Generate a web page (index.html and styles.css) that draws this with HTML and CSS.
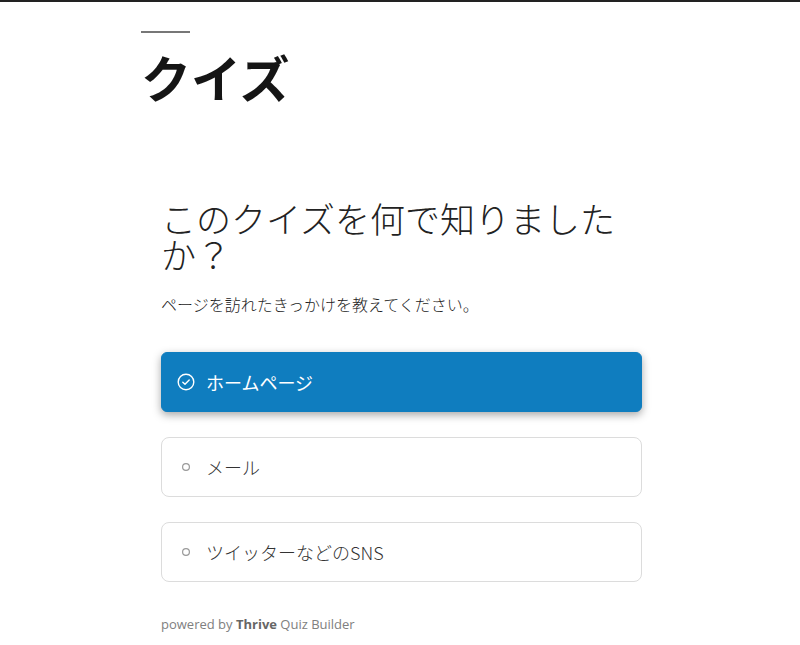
FILE: index.html
```html
<!DOCTYPE html>
<html lang="ja">
<head>
<meta charset="utf-8">
<title>クイズ</title>
<link rel="stylesheet" href="styles.css">
</head>
<body>
<div class="topbar"></div>
<main class="page">
  <div class="rule"></div>
  <h1 class="title">クイズ</h1>
  <section class="quiz">
    <h2 class="question">このクイズを何で知りましたか？</h2>
    <p class="desc">ページを訪れたきっかけを教えてください。</p>
    <div class="options">
      <div class="option selected">
        <span class="icon">
          <svg width="18" height="18" viewBox="0 0 18 18"><circle cx="9" cy="9" r="7.8" fill="none" stroke="#fff" stroke-width="1.4"/><path d="M5.8 9.2 L8 11.3 L12.2 6.9" fill="none" stroke="#fff" stroke-width="1.4" stroke-linecap="round" stroke-linejoin="round"/></svg>
        </span>
        <span class="label">ホームページ</span>
      </div>
      <div class="option">
        <span class="icon">
          <svg width="18" height="18" viewBox="0 0 18 18"><circle cx="9" cy="9" r="3.4" fill="none" stroke="#999" stroke-width="1.2"/></svg>
        </span>
        <span class="label">メール</span>
      </div>
      <div class="option">
        <span class="icon">
          <svg width="18" height="18" viewBox="0 0 18 18"><circle cx="9" cy="9" r="3.4" fill="none" stroke="#999" stroke-width="1.2"/></svg>
        </span>
        <span class="label">ツイッターなどのSNS</span>
      </div>
    </div>
    <p class="powered">powered by <b>Thrive</b> Quiz Builder</p>
  </section>
</main>
</body>
</html>
```
FILE: styles.css
```css
html, body {
  margin: 0;
  padding: 0;
  background: #fff;
}
body {
  font-family: "Noto Sans CJK JP", "Noto Sans", sans-serif;
  color: #222;
}
.topbar {
  height: 2px;
  background: #222;
}
.page {
  width: 521px;
  margin-left: calc(50% - 259px);
  padding-top: 29px;
}
.rule {
  width: 49px;
  height: 2px;
  background: #777;
}
.title {
  margin: 18px 0 0;
  font-size: 50px;
  line-height: 50px;
  font-weight: 700;
  color: #151515;
}
.quiz {
  padding: 0 20px;
  margin-top: 99px;
}
.question {
  margin: 0;
  font-size: 35px;
  line-height: 36px;
  font-weight: 300;
  color: #222;
}
.desc {
  margin: 20px 0 0;
  font-size: 16px;
  line-height: 24px;
  font-weight: 300;
  color: #222;
}
.options {
  margin-top: 36px;
  display: flex;
  flex-direction: column;
  gap: 25px;
}
.option {
  height: 60px;
  box-sizing: border-box;
  border: 1px solid #dcdcdc;
  border-radius: 8px;
  display: flex;
  align-items: center;
  padding-left: 15px;
  font-size: 18px;
  font-weight: 300;
  color: #333;
}
.option.selected {
  background: #0f7dbf;
  border-color: #0f7dbf;
  border-radius: 6px;
  color: #fff;
  font-weight: 400;
  box-shadow: 0 3px 8px rgba(0, 0, 0, 0.35);
}
.icon {
  width: 18px;
  height: 18px;
  display: flex;
  margin-right: 11px;
}
.label {
  line-height: 24px;
}
.powered {
  margin: 32px 0 0;
  font-family: "Open Sans", sans-serif;
  font-size: 13px;
  line-height: 20px;
  color: #808080;
}
.powered b {
  font-weight: 700;
  color: #666;
}
```
